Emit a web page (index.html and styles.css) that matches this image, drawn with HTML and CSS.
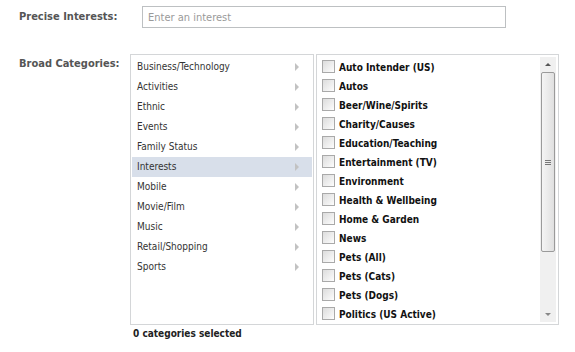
FILE: index.html
```html
<!DOCTYPE html>
<html>
<head>
<meta charset="utf-8">
<link rel="stylesheet" href="styles.css">
</head>
<body>
<div class="page">
  <div class="row row-precise">
    <div class="label label-precise">Precise Interests:</div>
    <div class="input">Enter an interest</div>
  </div>
  <div class="row row-broad">
    <div class="label label-broad">Broad Categories:</div>
    <div class="picker">
      <div class="panels">
        <ul class="cats">
          <li>Business/Technology<span class="arr"></span></li>
          <li>Activities<span class="arr"></span></li>
          <li>Ethnic<span class="arr"></span></li>
          <li>Events<span class="arr"></span></li>
          <li>Family Status<span class="arr"></span></li>
          <li class="sel">Interests<span class="arr"></span></li>
          <li>Mobile<span class="arr"></span></li>
          <li>Movie/Film<span class="arr"></span></li>
          <li>Music<span class="arr"></span></li>
          <li>Retail/Shopping<span class="arr"></span></li>
          <li>Sports<span class="arr"></span></li>
        </ul>
        <div class="subs">
          <ul class="items">
            <li><span class="cb"></span>Auto Intender (US)</li>
            <li><span class="cb"></span>Autos</li>
            <li><span class="cb"></span>Beer/Wine/Spirits</li>
            <li><span class="cb"></span>Charity/Causes</li>
            <li><span class="cb"></span>Education/Teaching</li>
            <li><span class="cb"></span>Entertainment (TV)</li>
            <li><span class="cb"></span>Environment</li>
            <li><span class="cb"></span>Health &amp; Wellbeing</li>
            <li><span class="cb"></span>Home &amp; Garden</li>
            <li><span class="cb"></span>News</li>
            <li><span class="cb"></span>Pets (All)</li>
            <li><span class="cb"></span>Pets (Cats)</li>
            <li><span class="cb"></span>Pets (Dogs)</li>
            <li><span class="cb"></span>Politics (US Active)</li>
          </ul>
          <div class="sbar">
            <div class="sb-btn up"><span></span></div>
            <div class="sb-track">
              <div class="thumb"><span class="grip"></span></div>
            </div>
            <div class="sb-btn down"><span></span></div>
          </div>
        </div>
      </div>
      <div class="count">0 categories selected</div>
    </div>
  </div>
</div>
</body>
</html>
```
FILE: styles.css
```css
* { box-sizing: border-box; }
html, body { margin: 0; padding: 0; background: #fff; }
body {
  font-family: "DejaVu Sans Condensed", "DejaVu Sans", sans-serif;
  font-size: 10px;
  color: #333;
}
.page { padding-top: 6px; }
.row { display: flex; padding-left: 19px; }
.label {
  font-weight: bold;
  color: #555;
  font-size: 11px;
}
.label-precise { width: 123px; padding-top: 4px; }
.input {
  width: 364px;
  height: 22px;
  border: 1px solid #bdc0c2;
  color: #9a9a9a;
  font-size: 11px;
  padding: 4px 0 0 5px;
  font-family: "DejaVu Sans Condensed", "DejaVu Sans", sans-serif;
}
.row-broad { margin-top: 26px; }
.label-broad { width: 111px; padding-top: 3px; }
.panels { display: flex; gap: 2px; }
.cats {
  list-style: none;
  margin: 0;
  padding: 2px 1px 0 1px;
  width: 184px;
  height: 271px;
  border: 1px solid #d4d6d8;
}
.cats li {
  height: 20px;
  line-height: 20px;
  padding-left: 5px;
  padding-right: 13px;
  display: flex;
  justify-content: space-between;
  align-items: center;
  color: #333;
}
.cats li.sel { background: #d8dfea; }
.arr {
  width: 0; height: 0;
  border-left: 4px solid #c2c2c2;
  border-top: 4px solid transparent;
  border-bottom: 4px solid transparent;
}
.subs {
  display: flex;
  width: 243px;
  height: 271px;
  border: 1px solid #d4d6d8;
  padding: 2px;
}
.items {
  list-style: none;
  margin: 0;
  padding: 1px 0 0 3px;
  flex: 1;
  overflow: hidden;
}
.items li {
  height: 19px;
  display: flex;
  align-items: center;
  font-weight: bold;
  color: #111;
  font-size: 10px;
}
.cb {
  width: 13px; height: 13px;
  border: 1px solid #a9a9a9;
  background: linear-gradient(135deg, #dcdcdc 0%, #f6f6f6 80%, #fff 100%);
  margin-right: 4px;
  flex: none;
  margin-top: -3px;
}
.sbar {
  width: 16px;
  display: flex;
  flex-direction: column;
  background: #f0f0f0;
}
.sb-btn {
  height: 15px;
  display: flex;
  align-items: center;
  justify-content: center;
  background: #f0f0f0;
}
.sb-btn span {
  width: 0; height: 0;
  border-left: 3px solid transparent;
  border-right: 3px solid transparent;
}
.up span { border-bottom: 3px solid #555; }
.down span { border-top: 3px solid #888; }
.sb-track { flex: 1; padding: 0 1px; }
.thumb {
  height: 180px;
  border: 1px solid #9a9a9a;
  border-radius: 2px;
  background: linear-gradient(90deg, #f4f4f4, #e0e0e0);
  display: flex;
  align-items: center;
  justify-content: center;
}
.grip {
  width: 6px; height: 5px;
  border-top: 1px solid #777;
  border-bottom: 1px solid #777;
  position: relative;
}
.grip::after {
  content: "";
  position: absolute;
  left: 0; right: 0; top: 1px;
  border-top: 1px solid #777;
}
.count {
  font-weight: bold;
  color: #222;
  font-size: 10px;
  padding: 3px 0 0 3px;
}
```
